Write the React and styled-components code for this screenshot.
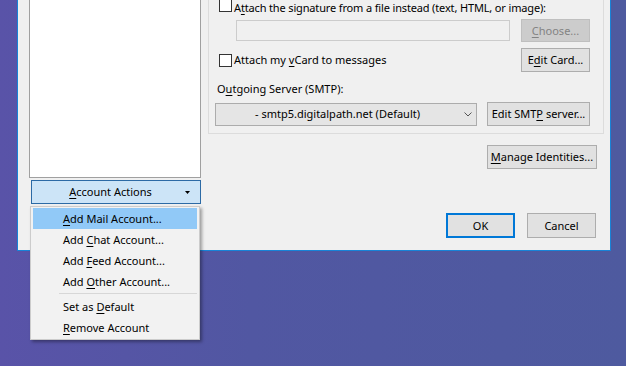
import React from "react";
import styled, { createGlobalStyle, css } from "styled-components";

const Global = createGlobalStyle`
  html, body { margin: 0; padding: 0; }
  body {
    width: 626px;
    height: 366px;
    overflow: hidden;
    font-family: "Noto Sans", "Open Sans", sans-serif;
    font-size: 11px;
    color: #000;
  }
`;

const Desktop = styled.div`
  width: 626px;
  height: 366px;
  box-sizing: border-box;
  padding-left: 17px;
  background: linear-gradient(90deg, #5953a8 0%, #5157a2 40%, #4e5a9f 100%);
`;

const Window = styled.div`
  box-sizing: border-box;
  width: 594px;
  height: 251px;
  background: #f0f0f0;
  border: 1px solid #1883d7;
  border-top: none;
  display: flex;
  gap: 7px;
  padding: 0 7px 0 11px;
`;

const LeftCol = styled.div`
  position: relative;
  width: 173px;
  display: flex;
  flex-direction: column;
`;

const ListBox = styled.div`
  box-sizing: border-box;
  height: 178px;
  background: #fff;
  border: 1px solid #a0a0a0;
  border-top: none;
`;

const ActionButton = styled.div`
  box-sizing: border-box;
  margin: 2px 0 0 2px;
  width: 170px;
  height: 24px;
  background: #cce4f7;
  border: 1px solid #2c6aa5;
  display: flex;
  align-items: center;
  padding: 0 10px 0 4px;
  line-height: 16px;
`;

const ActionLabel = styled.span`
  flex: 1;
  text-align: center;
`;

const Caret = styled.svg`
  width: 5px;
  height: 3px;
  display: block;
`;

const Menu = styled.div`
  position: absolute;
  left: 1px;
  top: 206px;
  box-sizing: border-box;
  width: 170px;
  background: #f2f2f2;
  border: 1px solid #cccccc;
  padding: 1px 2px;
  box-shadow: 2px 2px 3px rgba(0, 0, 0, 0.35);
  z-index: 10;
`;

const MenuItem = styled.div`
  height: 21px;
  line-height: 21px;
  padding-left: 30px;
  white-space: nowrap;
  background: ${(p) => (p.$active ? "#91c9f7" : "transparent")};
`;

const MenuSeparator = styled.div`
  height: 4px;
  margin-left: 26px;
  position: relative;
  &::before {
    content: "";
    position: absolute;
    left: 0;
    right: 0;
    top: 1px;
    height: 1px;
    background: #d7d7d7;
  }
`;

const Key = styled.span`
  text-decoration: underline;
  text-underline-offset: 2px;
  text-decoration-thickness: 1px;
`;

const RightCol = styled.div`
  flex: 1;
  display: flex;
  flex-direction: column;
`;

const Panel = styled.div`
  box-sizing: border-box;
  height: 134px;
  border: 1px solid #dcdcdc;
  border-top: none;
  display: flex;
  flex-direction: column;
`;

const CheckRow = styled.label`
  display: flex;
  align-items: center;
  gap: 2px;
  white-space: nowrap;
  line-height: 16px;
`;

const CheckBox = styled.span`
  box-sizing: border-box;
  width: 13px;
  height: 13px;
  flex: none;
  background: #fff;
  border: 1px solid #333;
`;

const SigRow = styled.div`
  height: 16px;
  padding-left: 10px;
  display: flex;
  align-items: flex-start;
  line-height: 16px;
  & ${CheckBox} {
    margin-top: -1px;
  }
`;

const SigText = styled.span`
  margin-left: 2px;
  white-space: nowrap;
  letter-spacing: -0.15px;
`;

const FileRow = styled.div`
  margin-top: 3px;
  display: flex;
  align-items: center;
  gap: 11px;
  padding: 0 13px 0 27px;
`;

const TextInput = styled.div`
  box-sizing: border-box;
  flex: 1;
  height: 21px;
  background: #f0f0f0;
  border: 1px solid #cccccc;
`;

const Button = styled.div`
  box-sizing: border-box;
  width: ${(p) => p.$w}px;
  height: ${(p) => p.$h || 23}px;
  flex: none;
  display: flex;
  align-items: center;
  justify-content: center;
  white-space: nowrap;
  background: #e1e1e1;
  border: 1px solid #adadad;
  line-height: 16px;
  ${(p) =>
    p.$disabled &&
    css`
      background: #cccccc;
      border-color: #bfbfbf;
      color: #838383;
    `}
  ${(p) =>
    p.$default &&
    css`
      border-color: #0078d7;
      box-shadow: inset 0 0 0 1px #0078d7;
    `}
`;

const CardRow = styled.div`
  margin-top: 6px;
  height: 24px;
  display: flex;
  align-items: center;
  justify-content: space-between;
  padding: 0 13px 0 10px;
`;

const FieldLabel = styled.div`
  margin-top: 9px;
  padding-left: 8px;
  line-height: 16px;
`;

const ServerRow = styled.div`
  margin-top: 5px;
  display: flex;
  align-items: center;
  gap: 10px;
  padding: 0 13px 0 6px;
`;

const Select = styled.div`
  box-sizing: border-box;
  width: 262px;
  height: 23px;
  background: #e5e5e5;
  border: 1px solid #acacac;
  display: flex;
  align-items: center;
  gap: 5px;
  padding-right: 4px;
  line-height: 16px;
`;

const SelectText = styled.span`
  flex: 1;
  text-align: center;
  white-space: nowrap;
`;

const Chevron = styled.svg`
  width: 8px;
  height: 5px;
  display: block;
`;

const ManageRow = styled.div`
  margin-top: 11px;
  display: flex;
  justify-content: flex-end;
  padding-right: 7px;
`;

const DialogButtons = styled.div`
  margin-top: 44px;
  display: flex;
  justify-content: flex-end;
  gap: 12px;
  padding-right: 8px;
`;

export default function App() {
  return (
    <>
      <Global />
      <Desktop>
        <Window>
          <LeftCol>
            <ListBox />
            <ActionButton>
              <ActionLabel>
                <Key>A</Key>ccount Actions
              </ActionLabel>
              <Caret viewBox="0 0 5 3">
                <polygon points="0,0 5,0 2.5,3" fill="#000" />
              </Caret>
            </ActionButton>
            <Menu>
              <MenuItem $active>
                <Key>A</Key>dd Mail Account...
              </MenuItem>
              <MenuItem>
                Add <Key>C</Key>hat Account...
              </MenuItem>
              <MenuItem>
                Add <Key>F</Key>eed Account...
              </MenuItem>
              <MenuItem>
                Add <Key>O</Key>ther Account...
              </MenuItem>
              <MenuSeparator />
              <MenuItem>
                Set as <Key>D</Key>efault
              </MenuItem>
              <MenuItem>
                <Key>R</Key>emove Account
              </MenuItem>
            </Menu>
          </LeftCol>
          <RightCol>
            <Panel>
              <SigRow>
                <CheckBox />
                <SigText>
                  A<Key>t</Key>tach the signature from a file instead (text, HTML, or image):
                </SigText>
              </SigRow>
              <FileRow>
                <TextInput />
                <Button $w={69} $disabled>
                  <span>
                    <Key>C</Key>hoose...
                  </span>
                </Button>
              </FileRow>
              <CardRow>
                <CheckRow>
                  <CheckBox />
                  <span>
                    Attach my <Key>v</Key>Card to messages
                  </span>
                </CheckRow>
                <Button $w={69} $h={24}>
                  <span>
                    E<Key>d</Key>it Card...
                  </span>
                </Button>
              </CardRow>
              <FieldLabel>
                O<Key>u</Key>tgoing Server (SMTP):
              </FieldLabel>
              <ServerRow>
                <Select>
                  <SelectText>- smtp5.digitalpath.net (Default)</SelectText>
                  <Chevron viewBox="0 0 8 5">
                    <polyline points="0.5,0.5 4,4 7.5,0.5" fill="none" stroke="#555" strokeWidth="1" />
                  </Chevron>
                </Select>
                <Button $w={103} $h={24}>
                  <span>
                    Edit SMT<Key>P</Key> server...
                  </span>
                </Button>
              </ServerRow>
            </Panel>
            <ManageRow>
              <Button $w={110} $h={24}>
                <span>
                  <Key>M</Key>anage Identities...
                </span>
              </Button>
            </ManageRow>
            <DialogButtons>
              <Button $w={69} $h={25} $default>
                OK
              </Button>
              <Button $w={69} $h={25}>
                Cancel
              </Button>
            </DialogButtons>
          </RightCol>
        </Window>
      </Desktop>
    </>
  );
}
